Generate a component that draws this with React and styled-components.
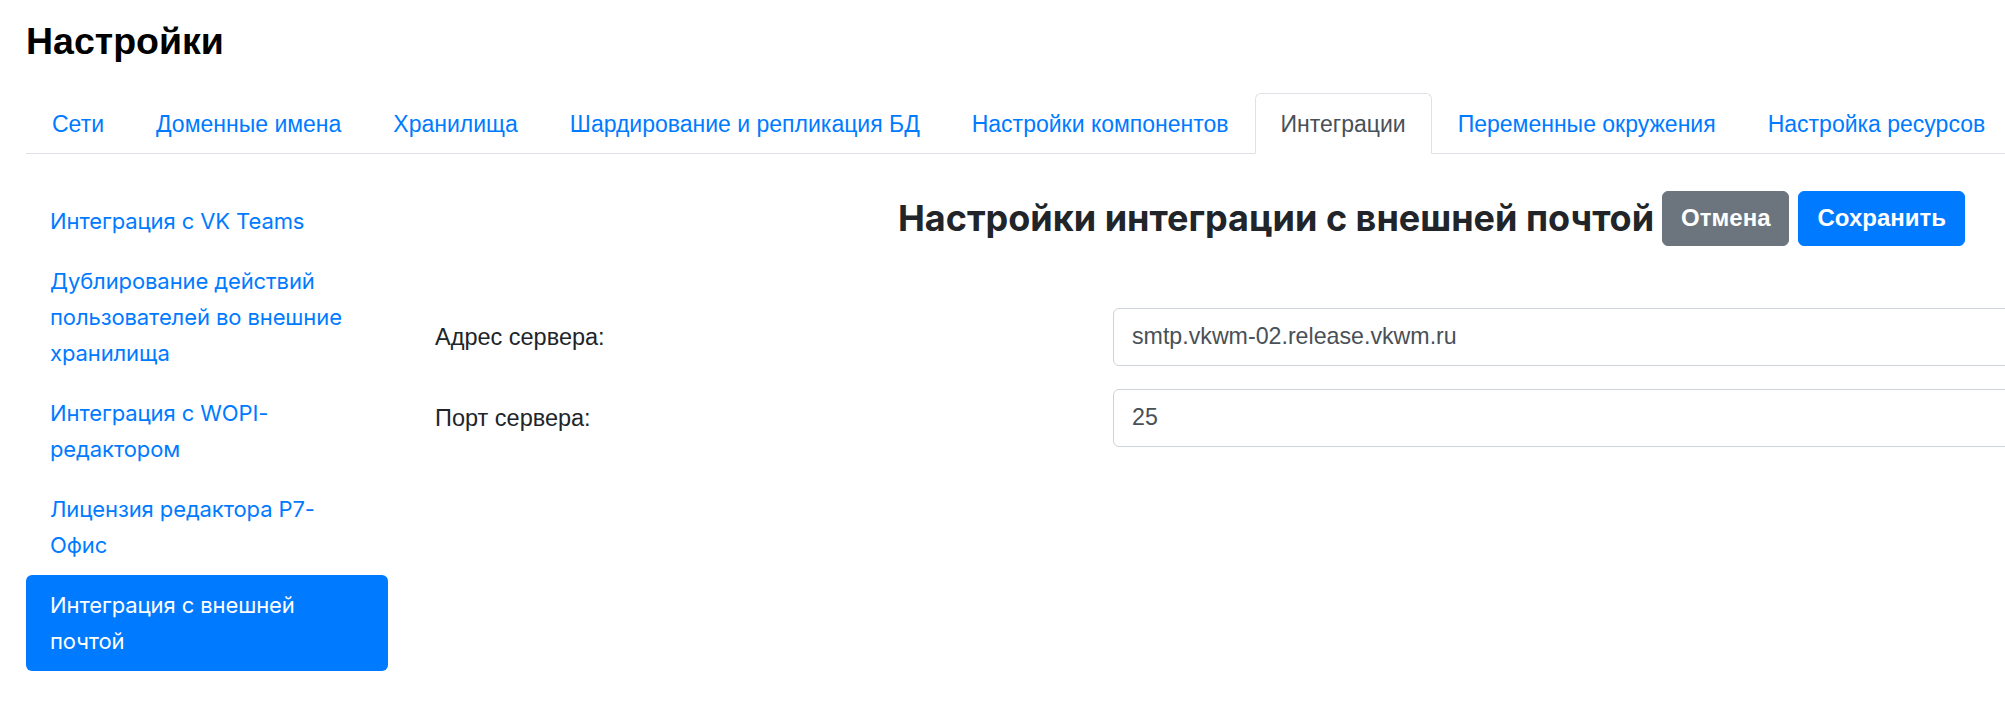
import React from "react";
import styled, { createGlobalStyle } from "styled-components";

const GlobalStyle = createGlobalStyle`
  html, body {
    margin: 0;
    padding: 0;
    background: #ffffff;
    overflow: hidden;
  }
  body {
    font-family: "Liberation Sans", Arial, sans-serif;
    font-size: 24px;
    line-height: 36px;
    color: #212529;
  }
  * { box-sizing: border-box; }
`;

const Page = styled.div`
  width: 2005px;
  padding: 20px 0 0 26px;
`;

const PageTitle = styled.h1`
  margin: 0;
  font-family: "Liberation Sans", Arial, sans-serif;
  font-weight: 700;
  font-size: 37.5px;
  line-height: 43px;
  color: #000000;
`;

const Tabs = styled.nav`
  margin-top: 30px;
  display: flex;
  border-bottom: 1.5px solid #dee2e6;
`;

const Tab = styled.a`
  display: block;
  padding: 11.5px 25px;
  margin-bottom: -1.5px;
  font-family: "Liberation Sans", Arial, sans-serif;
  font-size: 23px;
  line-height: 36px;
  white-space: nowrap;
  text-decoration: none;
  cursor: pointer;
  border: 1px solid transparent;
  border-top-left-radius: 6px;
  border-top-right-radius: 6px;
  color: ${(p) => (p.$active ? "#495057" : "#007bff")};
  background: ${(p) => (p.$active ? "#ffffff" : "transparent")};
  border-color: ${(p) =>
    p.$active ? "#dee2e6 #dee2e6 #ffffff" : "transparent"};
`;

const Body = styled.div`
  display: flex;
  margin-top: 37px;
`;

const Sidebar = styled.div`
  width: 362px;
  flex: none;
  display: flex;
  flex-direction: column;
`;

const SideItem = styled.a`
  display: block;
  padding: 12px 24px;
  border-radius: 6px;
  font-family: "Inter", "Noto Sans", sans-serif;
  font-size: 22px;
  line-height: 36px;
  letter-spacing: -0.1px;
  text-decoration: none;
  cursor: pointer;
  color: ${(p) => (p.$active ? "#ffffff" : "#007bff")};
  background: ${(p) => (p.$active ? "#007bff" : "transparent")};
`;

const Content = styled.div`
  flex: 1;
  min-width: 0;
  padding-left: 47px;
`;

const HeaderRow = styled.div`
  display: flex;
  justify-content: flex-end;
  align-items: center;
  padding-right: 40px;
`;

const SectionTitle = styled.h4`
  margin: 0 8px 0 0;
  font-family: "Inter", "Noto Sans", sans-serif;
  font-weight: 700;
  font-size: 36px;
  line-height: 42px;
  color: #212529;
  white-space: nowrap;
`;

const Button = styled.button`
  font-family: "Liberation Sans", Arial, sans-serif;
  font-weight: 700;
  font-size: 24px;
  line-height: 36px;
  padding: 8.5px 18px;
  border: 1.5px solid ${(p) => (p.$variant === "primary" ? "#007bff" : "#6c757d")};
  border-radius: 6px;
  color: #ffffff;
  background: ${(p) => (p.$variant === "primary" ? "#007bff" : "#6c757d")};
  margin-left: ${(p) => (p.$spaced ? "9px" : "0")};
  cursor: pointer;
`;

const Form = styled.div`
  margin-top: 62px;
`;

const FieldRow = styled.div`
  display: flex;
  align-items: center;
  margin-bottom: 23px;
`;

const Label = styled.label`
  width: 678px;
  flex: none;
  font-family: "Liberation Sans", Arial, sans-serif;
  font-size: 23.5px;
  line-height: 36px;
  color: #212529;
`;

const Input = styled.input`
  flex: none;
  width: 1000px;
  height: 58px;
  padding: 9px 18px;
  font-family: "Liberation Sans", Arial, sans-serif;
  font-size: 23.2px;
  line-height: 36px;
  color: #495057;
  background: #ffffff;
  border: 1.5px solid #ced4da;
  border-radius: 6px;
  outline: none;
`;

const tabs = [
  "Сети",
  "Доменные имена",
  "Хранилища",
  "Шардирование и репликация БД",
  "Настройки компонентов",
  "Интеграции",
  "Переменные окружения",
  "Настройка ресурсов",
];

const sideItems = [
  ["Интеграция с VK Teams"],
  ["Дублирование действий", "пользователей во внешние", "хранилища"],
  ["Интеграция с WOPI-", "редактором"],
  ["Лицензия редактора Р7-", "Офис"],
  ["Интеграция с внешней", "почтой"],
];

export default function App() {
  return (
    <>
      <GlobalStyle />
      <Page>
        <PageTitle>Настройки</PageTitle>
        <Tabs>
          {tabs.map((t) => (
            <Tab key={t} $active={t === "Интеграции"}>
              {t}
            </Tab>
          ))}
        </Tabs>
        <Body>
          <Sidebar>
            {sideItems.map((lines, i) => (
              <SideItem key={i} $active={i === sideItems.length - 1}>
                {lines.map((l, j) => (
                  <React.Fragment key={j}>
                    {j > 0 && <br />}
                    {l}
                  </React.Fragment>
                ))}
              </SideItem>
            ))}
          </Sidebar>
          <Content>
            <HeaderRow>
              <SectionTitle>Настройки интеграции с внешней почтой</SectionTitle>
              <Button $variant="secondary">Отмена</Button>
              <Button $variant="primary" $spaced>
                Сохранить
              </Button>
            </HeaderRow>
            <Form>
              <FieldRow>
                <Label>Адрес сервера:</Label>
                <Input defaultValue="smtp.vkwm-02.release.vkwm.ru" />
              </FieldRow>
              <FieldRow>
                <Label>Порт сервера:</Label>
                <Input defaultValue="25" />
              </FieldRow>
            </Form>
          </Content>
        </Body>
      </Page>
    </>
  );
}
